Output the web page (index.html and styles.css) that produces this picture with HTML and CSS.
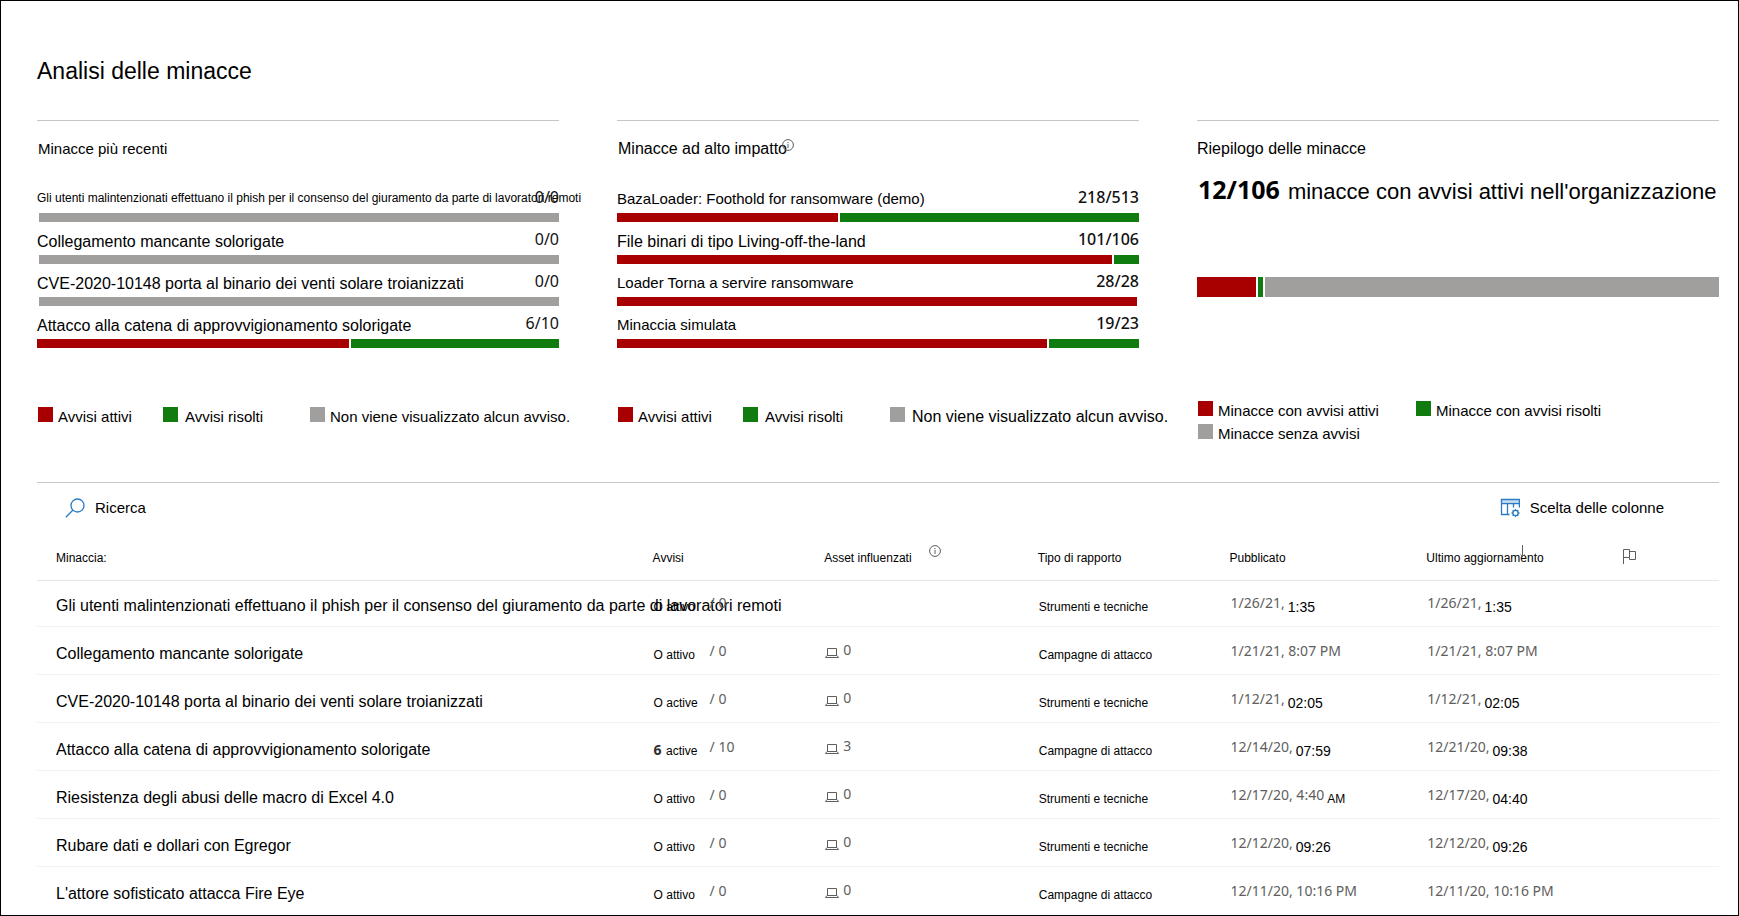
FILE: index.html
```html
<!DOCTYPE html>
<html lang="it">
<head>
<meta charset="utf-8">
<title>Analisi delle minacce</title>
<link rel="stylesheet" href="styles.css">
</head>
<body>
<svg class="sprite" aria-hidden="true">
  <symbol id="laptop" viewBox="0 0 14 11"><path d="M2.5 8V1.500H11.500V8M0.500 10.500H13.500L12 8.500H2Z" fill="none" stroke="currentColor"/></symbol>
  <symbol id="info" viewBox="0 0 12 12"><circle cx="6" cy="6" r="5.400" fill="none" stroke="currentColor"/><path d="M6 5V9M6 3V4.200" stroke="currentColor"/></symbol>
</svg>
<main class="page">
  <h1 class="title">Analisi delle minacce</h1>

  <div class="cards">
    <section class="card">
      <h2 class="heading small">Minacce più recenti</h2>
      <ul class="threats">
        <li class="threat"><div class="label"><span class="name tiny">Gli utenti malintenzionati effettuano il phish per il consenso del giuramento da parte di lavoratori remoti</span><span class="count">0/0</span></div><div class="bar"><i class="seg empty"></i><i class="seg none"></i></div></li>
        <li class="threat"><div class="label"><span class="name">Collegamento mancante solorigate</span><span class="count">0/0</span></div><div class="bar"><i class="seg empty"></i><i class="seg none"></i></div></li>
        <li class="threat"><div class="label"><span class="name">CVE-2020-10148 porta al binario dei venti solare troianizzati</span><span class="count">0/0</span></div><div class="bar"><i class="seg empty"></i><i class="seg none"></i></div></li>
        <li class="threat"><div class="label"><span class="name">Attacco alla catena di approvvigionamento solorigate</span><span class="count">6/10</span></div><div class="bar"><i class="seg active" style="flex-grow:6"></i><i class="seg resolved" style="flex-grow:4"></i></div></li>
      </ul>
      <ul class="legend">
        <li class="key"><i class="swatch active"></i>Avvisi attivi</li>
        <li class="key spaced"><i class="swatch resolved"></i>Avvisi risolti</li>
        <li class="key"><i class="swatch none"></i>Non viene visualizzato alcun avviso.</li>
      </ul>
    </section>

    <section class="card">
      <h2 class="heading">Minacce ad alto impatto<svg class="info" width="12" height="12"><use href="#info"/></svg></h2>
      <ul class="threats">
        <li class="threat"><div class="label"><span class="name small">BazaLoader: Foothold for ransomware (demo)</span><span class="count strong">218/513</span></div><div class="bar"><i class="seg active" style="flex-grow:218"></i><i class="seg resolved" style="flex-grow:295"></i></div></li>
        <li class="threat"><div class="label"><span class="name">File binari di tipo Living-off-the-land</span><span class="count strong">101/106</span></div><div class="bar"><i class="seg active" style="flex-grow:101"></i><i class="seg resolved" style="flex-grow:5"></i></div></li>
        <li class="threat"><div class="label"><span class="name small">Loader Torna a servire ransomware</span><span class="count strong">28/28</span></div><div class="bar"><i class="seg active" style="flex-grow:28"></i><i class="seg empty"></i></div></li>
        <li class="threat"><div class="label"><span class="name small">Minaccia simulata</span><span class="count strong">19/23</span></div><div class="bar"><i class="seg active" style="flex-grow:19"></i><i class="seg resolved" style="flex-grow:4"></i></div></li>
      </ul>
      <ul class="legend">
        <li class="key"><i class="swatch active"></i>Avvisi attivi</li>
        <li class="key spaced"><i class="swatch resolved"></i>Avvisi risolti</li>
        <li class="key large"><i class="swatch none"></i>Non viene visualizzato alcun avviso.</li>
      </ul>
    </section>

    <section class="card">
      <h2 class="heading flush">Riepilogo delle minacce</h2>
      <p class="summary"><strong class="total">12/106</strong><span>minacce con avvisi attivi nell'organizzazione</span></p>
      <div class="bar thick"><i class="seg active" style="flex-grow:12"></i><i class="seg resolved" style="flex-grow:1"></i><i class="seg none" style="flex-grow:93"></i></div>
      <ul class="legend pairs">
        <li class="key"><i class="swatch active"></i>Minacce con avvisi attivi</li>
        <li class="key"><i class="swatch resolved"></i>Minacce con avvisi risolti</li>
        <li class="key"><i class="swatch none"></i>Minacce senza avvisi</li>
      </ul>
    </section>
  </div>

  <section class="list">
    <div class="toolbar">
      <label class="search"><svg class="glyph" width="20" height="20" viewBox="0 0 20 20" fill="none" stroke="currentColor" stroke-width="1.300"><circle cx="12.500" cy="7.500" r="6.500"/><path d="M8 12L0.800 19.200"/></svg><input class="query" type="text" placeholder="Ricerca" aria-label="Ricerca"></label>
      <button class="columns" type="button"><svg class="glyph" width="20" height="20" viewBox="0 0 20 20" fill="none" stroke="currentColor" stroke-width="1.300"><path d="M0.600 3H19" stroke-width="3" opacity="0.250"/><path d="M9.500 16.500H1.500V1.500H19.400V9.500M1.500 5.500H19.400M7.500 5.500V16.500M13.500 5.500V9.500"/><circle cx="15.500" cy="15" r="2.600"/><path d="M15.500 11V12.500M15.500 17.500V19M11.500 15H13M18 15H19.500M12.700 12.200L13.700 13.200M17.300 16.800L18.300 17.800M18.300 12.200L17.300 13.200M13.700 16.800L12.700 17.800"/></svg>Scelta delle colonne</button>
    </div>
    <table class="grid">
      <colgroup><col class="c-name"><col class="c-alerts"><col class="c-assets"><col class="c-type"><col class="c-date"><col class="c-date"><col></colgroup>
      <thead>
        <tr>
          <th class="first">Minaccia:</th><th>Avvisi</th>
          <th><span class="line">Asset influenzati<svg class="info" width="12" height="12"><use href="#info"/></svg></span></th>
          <th>Tipo di rapporto</th><th>Pubblicato</th>
          <th><span class="sorted">Ultimo aggiornamento<svg class="arrow" width="7" height="12" viewBox="0 0 7 12"><path d="M3.500 0V11.500M1.500 9.500L3.500 11.500L5.500 9.500" fill="none" stroke="currentColor"/></svg></span></th>
          <th><svg class="flag" width="13" height="15" viewBox="0 0 13 15" aria-label="Contrassegno"><path d="M0.500 15V0.500H6.500V8.500H0.500M6.500 2.500H12.500V10.500H6.500V8.500" fill="none" stroke="currentColor"/></svg></th>
        </tr>
      </thead>
      <tbody>
        <tr class="short"><td class="first">Gli utenti malintenzionati effettuano il phish per il consenso del giuramento da parte di lavoratori remoti</td><td><div class="line"><span class="state">O attivo</span><span class="seg-num">/ 0</span></div></td><td></td><td class="type">Strumenti e tecniche</td><td><div class="line"><span class="seg-num">1/26/21,</span><span class="time">1:35</span></div></td><td><div class="line"><span class="seg-num">1/26/21,</span><span class="time">1:35</span></div></td><td></td></tr>
        <tr><td class="first">Collegamento mancante solorigate</td><td><div class="line"><span class="state">O attivo</span><span class="seg-num">/ 0</span></div></td><td><div class="line"><svg class="laptop" width="14" height="11"><use href="#laptop"/></svg><span class="asset">0</span></div></td><td class="type">Campagne di attacco</td><td><div class="line"><span class="seg-num">1/21/21, 8:07 PM</span></div></td><td><div class="line"><span class="seg-num">1/21/21, 8:07 PM</span></div></td><td></td></tr>
        <tr><td class="first">CVE-2020-10148 porta al binario dei venti solare troianizzati</td><td><div class="line"><span class="state">O active</span><span class="seg-num">/ 0</span></div></td><td><div class="line"><svg class="laptop" width="14" height="11"><use href="#laptop"/></svg><span class="asset">0</span></div></td><td class="type">Strumenti e tecniche</td><td><div class="line"><span class="seg-num">1/12/21,</span><span class="time">02:05</span></div></td><td><div class="line"><span class="seg-num">1/12/21,</span><span class="time">02:05</span></div></td><td></td></tr>
        <tr><td class="first">Attacco alla catena di approvvigionamento solorigate</td><td><div class="line"><span class="state"><b class="hot">6</b> active</span><span class="seg-num">/ 10</span></div></td><td><div class="line"><svg class="laptop" width="14" height="11"><use href="#laptop"/></svg><span class="asset">3</span></div></td><td class="type">Campagne di attacco</td><td><div class="line"><span class="seg-num">12/14/20,</span><span class="time">07:59</span></div></td><td><div class="line"><span class="seg-num">12/21/20,</span><span class="time">09:38</span></div></td><td></td></tr>
        <tr><td class="first">Riesistenza degli abusi delle macro di Excel 4.0</td><td><div class="line"><span class="state">O attivo</span><span class="seg-num">/ 0</span></div></td><td><div class="line"><svg class="laptop" width="14" height="11"><use href="#laptop"/></svg><span class="asset">0</span></div></td><td class="type">Strumenti e tecniche</td><td><div class="line"><span class="seg-num">12/17/20, 4:40</span><span class="type">AM</span></div></td><td><div class="line"><span class="seg-num">12/17/20,</span><span class="time">04:40</span></div></td><td></td></tr>
        <tr><td class="first">Rubare dati e dollari con Egregor</td><td><div class="line"><span class="state">O attivo</span><span class="seg-num">/ 0</span></div></td><td><div class="line"><svg class="laptop" width="14" height="11"><use href="#laptop"/></svg><span class="asset">0</span></div></td><td class="type">Strumenti e tecniche</td><td><div class="line"><span class="seg-num">12/12/20,</span><span class="time">09:26</span></div></td><td><div class="line"><span class="seg-num">12/12/20,</span><span class="time">09:26</span></div></td><td></td></tr>
        <tr><td class="first">L'attore sofisticato attacca Fire Eye</td><td><div class="line"><span class="state">O attivo</span><span class="seg-num">/ 0</span></div></td><td><div class="line"><svg class="laptop" width="14" height="11"><use href="#laptop"/></svg><span class="asset">0</span></div></td><td class="type">Campagne di attacco</td><td><div class="line"><span class="seg-num">12/11/20, 10:16 PM</span></div></td><td><div class="line"><span class="seg-num">12/11/20, 10:16 PM</span></div></td><td></td></tr>
      </tbody>
    </table>
  </section>
</main>
</body>
</html>
```
FILE: styles.css
```css
* { box-sizing: border-box; }
body { margin: 0; background: #fff; color: #000; font: 15px/20px "Liberation Sans", Arial, sans-serif; }
ul, h1, h2, p { margin: 0; padding: 0; list-style: none; font-weight: 400; }
.sprite { display: none; }

.page { min-height: 100vh; padding: 56px 19px 0 36px; border: 1px solid #000; overflow: hidden; }
.title { font-size: 23px; line-height: 28px; }

.cards { display: grid; grid-template-columns: repeat(3, minmax(0, 1fr)); gap: 58px; margin-top: 35px; }
.card { border-top: 1px solid #c8c6c4; padding-top: 18px; }
.heading { display: flex; padding-left: 1px; font-size: 16px; line-height: 20px; white-space: nowrap; }
.heading.small { font-size: 15px; }
.heading.flush { padding-left: 0; }
.info { color: #605e5c; }
.heading .info { margin-left: -5px; }

.threats { margin-top: 21px; }
.label { display: flex; align-items: flex-end; justify-content: space-between; height: 33px; padding-bottom: 3px; white-space: nowrap; }
.name { flex: 1; min-width: 0; font-size: 16px; }
.name.small { font-size: 15px; line-height: 22px; }
.name.tiny { font-size: 12px; line-height: 24px; }
.count { font: 16px/26px "Noto Sans", sans-serif; color: #111; }
.count.strong { font-weight: 500; }

.bar { display: flex; gap: 2px; height: 9px; }
.bar.thick { height: 20px; margin-top: 71px; }
.seg { flex: 1 1 0; }
.seg.empty { flex: none; width: 0; }
.active { background: #a80000; }
.resolved { background: #107c10; }
.none { background: #a19f9d; }

.legend { display: grid; grid-template-columns: 125px 147px auto; margin-top: 59px; white-space: nowrap; }
.legend.pairs { grid-template-columns: 218px auto; row-gap: 3px; margin-top: 104px; }
.key { display: flex; gap: 5px; padding-left: 1px; }
.key.spaced { gap: 7px; }
.key.large { gap: 7px; font-size: 16px; }
.swatch { flex: none; width: 15px; height: 15px; }

.summary { display: flex; align-items: baseline; gap: 8px; margin-top: 16px; padding-left: 1px; font-size: 22px; line-height: 28px; white-space: nowrap; }
.total { font: 700 25px/28px "Noto Sans", sans-serif; }

.list { margin-top: 38px; border-top: 1px solid #c8c6c4; }
.toolbar { display: flex; justify-content: space-between; padding: 15px 55px 17px 28px; }
.search, .columns { display: flex; align-items: center; gap: 10px; }
.glyph { color: #2b7cc4; }
.query { width: 200px; height: 20px; padding: 0; border: 0; outline: 0; background: none; font: inherit; color: #000; }
.query::placeholder { color: #000; opacity: 1; }
.columns { padding: 0; border: 0; background: none; font: inherit; color: #000; }

.grid { width: 100%; table-layout: fixed; border-collapse: separate; border-spacing: 0; }
.c-name { width: 36.6%; }
.c-alerts { width: 10.2%; }
.c-assets { width: 12.7%; }
.c-type { width: 11.4%; }
.c-date { width: 11.7%; }
.grid th, .grid td { padding: 0; text-align: left; vertical-align: bottom; white-space: nowrap; font-weight: 400; }
.grid th { height: 46px; padding-bottom: 13px; border-bottom: 1px solid #e6e6e6; font-size: 12px; line-height: 18px; }
.grid td { height: 48px; padding: 0 0 10px 1px; border-bottom: 1px solid #f3f2f1; }
.grid .short td { height: 46px; }
.grid tbody tr:last-child td { border-bottom-color: #fff; }
.grid .first { padding-left: 19px; }
.grid td.first { font-size: 16px; line-height: 20px; }
.grid .type, .state { font-size: 12px; line-height: 18px; }
.line { display: flex; align-items: flex-end; }
th .info { margin: 0 0 10px 17px; }
.state { width: 56px; }
.hot { margin-right: 1px; font: 700 14px/18px "Noto Sans", sans-serif; color: #323130; }
.seg-num { margin-right: 3px; font: 14px/26px "Noto Sans", sans-serif; color: #605e5c; }
.time { font-size: 14px; line-height: 18px; }
.laptop { margin-bottom: 6px; color: #605e5c; }
.asset { margin-left: 4px; font: 14px/28px "Noto Sans", sans-serif; color: #605e5c; }
.sorted { position: relative; }
.arrow { position: absolute; right: 18px; top: -6px; color: #605e5c; }
.flag { display: block; margin-bottom: 3px; color: #605e5c; }
```
